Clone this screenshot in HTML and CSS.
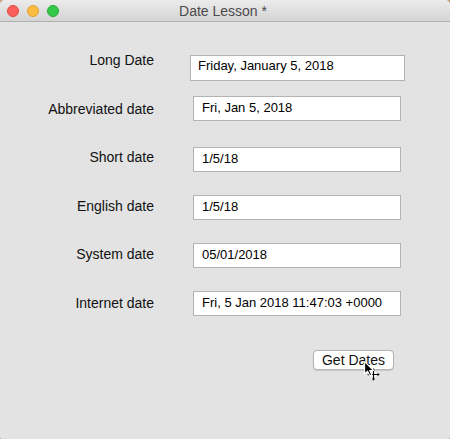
FILE: index.html
```html
<!DOCTYPE html>
<html lang="en">
<head>
<meta charset="utf-8">
<title>Date Lesson</title>
<link rel="stylesheet" href="styles.css">
</head>
<body>
<div class="window">
  <div class="titlebar">
    <div class="lights">
      <span class="light red"></span>
      <span class="light yellow"></span>
      <span class="light green"></span>
    </div>
    <div class="title">Date Lesson *</div>
  </div>
  <div class="form">
    <div class="row row-long">
      <div class="label lbl-long">Long Date</div>
      <div class="field field-long">Friday, January 5, 2018</div>
    </div>
    <div class="row row-abbr">
      <div class="label lbl-abbr">Abbreviated date</div>
      <div class="field">Fri, Jan 5, 2018</div>
    </div>
    <div class="row row-short">
      <div class="label lbl-short">Short date</div>
      <div class="field">1/5/18</div>
    </div>
    <div class="row">
      <div class="label lbl-mid">English date</div>
      <div class="field">1/5/18</div>
    </div>
    <div class="row">
      <div class="label lbl-mid">System date</div>
      <div class="field">05/01/2018</div>
    </div>
    <div class="row">
      <div class="label lbl-net">Internet date</div>
      <div class="field">Fri, 5 Jan 2018 11:47:03 +0000</div>
    </div>
    <div class="actions">
      <div class="button">Get Dates
        <svg class="cursor" width="24" height="24" viewBox="0 0 24 24">
          <path d="M9.5 8 V19 M4 13.5 H15" stroke="#fff" stroke-width="3.5"/>
          <path d="M9.5 8.5 V18.5 M4.5 13.5 H14.5" stroke="#000" stroke-width="1.2"/>
          <path d="M7.8 9.6 L9.5 7.3 L11.2 9.6 Z M7.8 17.4 L9.5 19.7 L11.2 17.4 Z M5.6 11.8 L3.3 13.5 L5.6 15.2 Z M13.4 11.8 L15.7 13.5 L13.4 15.2 Z" fill="#000"/>
          <path d="M0.6 0.6 L0.6 13 L3.6 10.2 L5.8 14.8 L7.8 13.9 L5.7 9.5 L9.6 9.5 Z" fill="#000" stroke="#fff" stroke-width="1.1" stroke-linejoin="round"/>
        </svg>
      </div>
    </div>
  </div>
</div>
</body>
</html>
```

FILE: styles.css
```css
html, body {
  margin: 0;
  padding: 0;
  background: #c9a27c;
}
.window {
  width: 450px;
  height: 439px;
  background: #e3e3e3;
  border-radius: 5px 5px 2px 2px;
  overflow: hidden;
  font-family: "Liberation Sans", Arial, sans-serif;
  color: #111;
}
.titlebar {
  height: 21px;
  border-bottom: 1px solid #b0b0b0;
  background: linear-gradient(#ececec, #d4d4d4);
  display: flex;
  align-items: center;
  position: relative;
}
.lights {
  display: flex;
  gap: 8px;
  padding-left: 7px;
  padding-top: 1px;
}
.light {
  box-sizing: border-box;
  width: 12px;
  height: 12px;
  border-radius: 50%;
  border: 0.5px solid transparent;
}
.red { background: #fc605b; border-color: #de4943; }
.yellow { background: #fdbc40; border-color: #dea135; }
.green { background: #34c84a; border-color: #27aa35; }
.title {
  flex: 1;
  text-align: center;
  font-size: 14px;
  color: #4a4a4a;
  margin-left: -63px;
  margin-top: 1px;
}
.form {
  display: flex;
  flex-direction: column;
  padding-top: 33px;
}
.row {
  display: flex;
  align-items: flex-start;
  margin-top: 23px;
}
.row-long { margin-top: 0; }
.row-abbr { margin-top: 15px; }
.row-short { margin-top: 26px; }
.label {
  width: 154px;
  text-align: right;
  font-size: 14px;
  line-height: 16px;
  color: #111;
}
.lbl-long { margin-top: -3px; }
.lbl-abbr { margin-top: 5px; }
.lbl-short { margin-top: 2px; }
.lbl-mid { margin-top: 3px; }
.lbl-net { margin-top: 4px; }
.field {
  box-sizing: border-box;
  width: 208px;
  height: 25px;
  margin-left: 39px;
  background: #fff;
  border: 1px solid #b3b3b3;
  padding: 3px 0 0 8px;
  font-size: 13px;
  line-height: 15px;
  color: #000;
  white-space: nowrap;
}
.field-long {
  width: 215px;
  height: 26px;
  margin-left: 36px;
  padding: 2px 0 0 7px;
}
.actions {
  display: flex;
  justify-content: flex-end;
  padding-right: 56px;
  margin-top: 34px;
}
.button {
  position: relative;
  box-sizing: border-box;
  width: 81px;
  height: 20px;
  background: #fff;
  border: 1px solid #b4b4b4;
  border-radius: 4px;
  box-shadow: 0 0.5px 1px rgba(0,0,0,0.12);
  font-size: 14px;
  line-height: 18px;
  text-align: center;
  color: #111;
}
.cursor {
  position: absolute;
  left: 50px;
  top: 10px;
}
```
